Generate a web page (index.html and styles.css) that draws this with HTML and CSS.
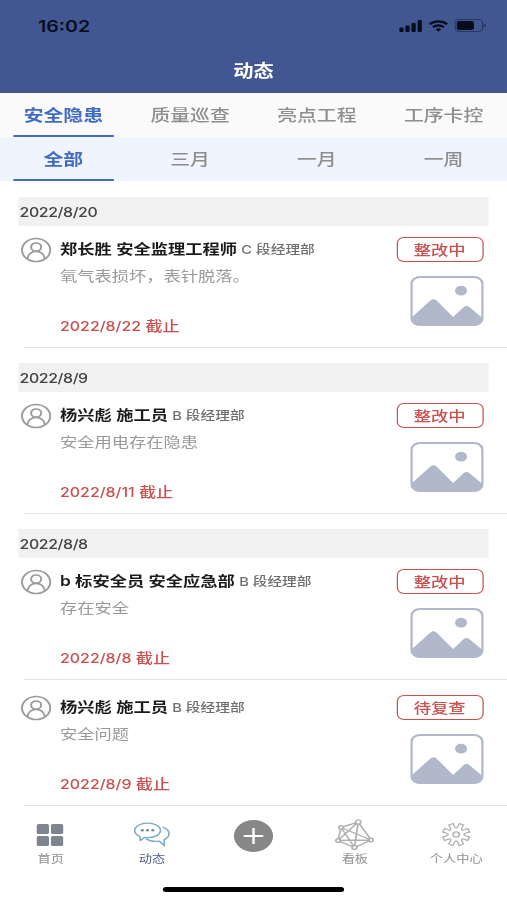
FILE: index.html
```html
<!DOCTYPE html>
<html lang="zh-CN">
<head>
    <meta charset="UTF-8">
    <meta name="viewport" content="width=device-width, initial-scale=1.0">
    <title>动态</title>
    <link rel="stylesheet" href="styles.css">
</head>
<body>
    <!-- Shared icons -->
    <svg class="sprite" aria-hidden="true">
        <symbol id="avatar" viewBox="0 0 26 26">
            <g fill="none" stroke="#9c9c9c" stroke-width="1.7">
                <circle cx="13" cy="13" r="12"/>
                <circle cx="13" cy="10" r="4.300"/>
                <path d="M5.600 22c.6-4.700 3.500-7.600 7.400-7.600s6.800 2.900 7.400 7.600"/>
            </g>
        </symbol>
        <symbol id="picture" viewBox="0 0 60 50">
            <rect x="1" y="1" width="58" height="48" rx="7" fill="#fff" stroke="#b0b8c9" stroke-width="2"/>
            <circle cx="41.500" cy="14.700" r="4.900" fill="#b0b8c9"/>
            <path d="M1 41.500 16.500 24.600q2.500-2.600 5 0L35 41l8.500-9.700q2.500-2.500 5 0L59 42q-.5 7.500-7.500 7.500h-43Q1 49.500 1 41.500z" fill="#b0b8c9"/>
        </symbol>
    </svg>

    <div class="phone">
        <header class="header">
            <div class="status-bar">
                <span class="time">16:02</span>
                <div class="status-icons">
                    <svg width="19" height="12" viewBox="0 0 19 12" fill="#080d1c">
                        <rect x="0" y="7.500" width="3.500" height="4.500" rx="1"/>
                        <rect x="5" y="5.500" width="3.500" height="6.500" rx="1"/>
                        <rect x="10" y="3" width="3.500" height="9" rx="1"/>
                        <rect x="15" y="0" width="3.500" height="12" rx="1"/>
                    </svg>
                    <svg width="16" height="12" viewBox="0 0 16 12" fill="none" stroke="#080d1c" stroke-width="2.100">
                        <path d="M.9 4.300a10.200 10.200 0 0 1 14.200 0"/>
                        <path d="M3.500 7.200a6.500 6.500 0 0 1 9 0"/>
                        <path d="M8 11.700 5.700 9.300a3.300 3.300 0 0 1 4.600 0z" fill="#080d1c" stroke="none"/>
                    </svg>
                    <svg width="26" height="13" viewBox="0 0 26 13">
                        <rect x=".6" y=".6" width="22.500" height="11.800" rx="3.500" fill="none" stroke="#263764" stroke-width="1"/>
                        <rect x="2" y="2" width="14" height="9" rx="1.800" fill="#080d1c"/>
                        <path d="M24 4.500q1.800.6 1.800 2t-1.800 2z" fill="#263764"/>
                    </svg>
                </div>
            </div>
            <h1>动态</h1>
        </header>

        <nav class="tabs">
            <a class="tab active">安全隐患</a>
            <a class="tab">质量巡查</a>
            <a class="tab">亮点工程</a>
            <a class="tab">工序卡控</a>
        </nav>
        <nav class="tabs tabs-period">
            <a class="tab active">全部</a>
            <a class="tab">三月</a>
            <a class="tab">一月</a>
            <a class="tab">一周</a>
        </nav>

        <main class="list">
            <section class="group">
                <h2>2022/8/20</h2>
                <article class="item">
                    <svg class="avatar"><use href="#avatar"/></svg>
                    <div class="info">
                        <p class="name">郑长胜 安全监理工程师 <small>C 段经理部</small></p>
                        <p class="desc">氧气表损坏，表针脱落。</p>
                        <p class="deadline">2022/8/22 <span>截止</span></p>
                    </div>
                    <div class="side">
                        <span class="badge">整改中</span>
                        <svg class="thumb"><use href="#picture"/></svg>
                    </div>
                </article>
            </section>

            <section class="group">
                <h2>2022/8/9</h2>
                <article class="item">
                    <svg class="avatar"><use href="#avatar"/></svg>
                    <div class="info">
                        <p class="name">杨兴彪 施工员 <small>B 段经理部</small></p>
                        <p class="desc">安全用电存在隐患</p>
                        <p class="deadline">2022/8/11 <span>截止</span></p>
                    </div>
                    <div class="side">
                        <span class="badge">整改中</span>
                        <svg class="thumb"><use href="#picture"/></svg>
                    </div>
                </article>
            </section>

            <section class="group">
                <h2>2022/8/8</h2>
                <article class="item">
                    <svg class="avatar"><use href="#avatar"/></svg>
                    <div class="info">
                        <p class="name">b 标安全员 安全应急部 <small>B 段经理部</small></p>
                        <p class="desc">存在安全</p>
                        <p class="deadline">2022/8/8 <span>截止</span></p>
                    </div>
                    <div class="side">
                        <span class="badge">整改中</span>
                        <svg class="thumb"><use href="#picture"/></svg>
                    </div>
                </article>
                <article class="item">
                    <svg class="avatar"><use href="#avatar"/></svg>
                    <div class="info">
                        <p class="name">杨兴彪 施工员 <small>B 段经理部</small></p>
                        <p class="desc">安全问题</p>
                        <p class="deadline">2022/8/9 <span>截止</span></p>
                    </div>
                    <div class="side">
                        <span class="badge">待复查</span>
                        <svg class="thumb"><use href="#picture"/></svg>
                    </div>
                </article>
            </section>
        </main>

        <footer class="tabbar">
            <a class="tabbar-item">
                <svg width="32" height="32" viewBox="0 0 32 32" fill="#7e8490">
                    <rect x="5" y="5" width="10" height="10" rx="1.500"/>
                    <rect x="16.600" y="5" width="10" height="10" rx="1.500"/>
                    <rect x="5" y="17" width="10" height="10" rx="1.500"/>
                    <rect x="16.600" y="17" width="10" height="10" rx="1.500"/>
                </svg>
                <span>首页</span>
            </a>
            <a class="tabbar-item active">
                <svg width="32" height="32" viewBox="0 0 32 32" fill="none" stroke="#79a9c8" stroke-width="1.300" stroke-linejoin="round">
                    <path d="M6.200 17.500C3.500 16 2 13.800 2 11.500 2 7.400 6.800 4.200 12.500 4.200S23 7.400 23 11.500s-4.600 7.200-10.500 7.200c-1 0-1.700 0-2.500-.2L6.700 21.500z"/>
                    <path d="M24.800 8.200c3.200 1.300 5.200 3.700 5.200 6.500 0 2.400-1.500 4.500-4 5.900l.3 6.100-4.200-4.500c-4.200.6-8.500-.3-10.800-2.400"/>
                    <g fill="#6f8dac" stroke="none">
                        <circle cx="8.200" cy="11.300" r="1.300"/>
                        <circle cx="12.500" cy="11.300" r="1.300"/>
                        <circle cx="16.800" cy="11.300" r="1.300"/>
                    </g>
                </svg>
                <span>动态</span>
            </a>
            <a class="tabbar-item">
                <svg width="32" height="32" viewBox="0 0 32 32">
                    <circle cx="16" cy="17" r="16" fill="#878787"/>
                    <path d="M16 9v16M8 17h16" stroke="#fff" stroke-width="2"/>
                </svg>
            </a>
            <a class="tabbar-item">
                <svg width="32" height="32" viewBox="0 0 32 32" fill="none" stroke="#b0b0b0" stroke-width="1.400">
                    <path d="M4.500 8.500 18.500 3 29 21 15.500 28.500 2 21.500zM4.500 8.500 29 21M4.500 8.500l11 20M18.500 3 2 21.500M18.500 3l-3 25.500M2 21.500 29 21"/>
                    <g fill="#fff">
                        <circle cx="4.500" cy="8.500" r="1.800"/>
                        <circle cx="18.500" cy="3" r="2.100"/>
                        <circle cx="29" cy="21" r="1.700"/>
                        <circle cx="15.500" cy="28.500" r="2"/>
                        <circle cx="2" cy="21.500" r="1.800"/>
                    </g>
                </svg>
                <span>看板</span>
            </a>
            <a class="tabbar-item">
                <svg width="32" height="32" viewBox="0 0 32 32" fill="none" stroke="#b0b0b0" stroke-width="1.200" stroke-linejoin="round">
                    <path id="gear"/>
                    <circle cx="15.500" cy="15.500" r="2.600"/>
                </svg>
                <span>个人中心</span>
            </a>
        </footer>
        <div class="home-indicator"></div>
    </div>

    <script>
        // Eight-tooth gear, teeth joined by rounded valleys
        function polar(degrees, r) {
            const angle = degrees * Math.PI / 180;
            return (15.5 + r * Math.cos(angle)).toFixed(2) + " " + (15.5 + r * Math.sin(angle)).toFixed(2);
        }

        let d = "M" + polar(12.5, 11.2);
        for (let i = 0; i < 8; i++) {
            const tooth = i * 45 + 22.5;
            d += "L" + polar(tooth + 10, 11.2);
            d += "C" + polar(tooth + 14, 5) + " " + polar(tooth + 31, 5) + " " + polar(tooth + 35, 11.2);
        }
        document.getElementById("gear").setAttribute("d", d + "Z");
    </script>
</body>
</html>
```
FILE: styles.css
```css
:root {
    --header: #425792;
    --primary: #3f6bc4;
    --grey: #8e8e8e;
    --red: #c9504e;
}

* {
    margin: 0;
    padding: 0;
    box-sizing: border-box;
}

body {
    width: 507px;
    height: 900px;
    overflow: hidden;
    background: #fff;
    font-family: Inter, "Noto Sans CJK SC", sans-serif;
}

.sprite {
    display: none;
}

/* 414pt wide screen stretched to the full window width */
.phone {
    width: 414px;
    height: 900px;
    display: flex;
    flex-direction: column;
    transform: scaleX(1.2246);
    transform-origin: 0 0;
}

.header {
    height: 93px;
    flex: none;
    background: var(--header);
}

.status-bar {
    height: 51px;
    padding: 0 17px 0 31px;
    display: flex;
    align-items: center;
    justify-content: space-between;
}

.time {
    font-size: 16px;
    font-weight: 600;
    color: #080d1c;
}

.status-icons {
    display: flex;
    align-items: center;
    gap: 5px;
}

.header h1 {
    font-size: 16.5px;
    font-weight: 600;
    line-height: 40px;
    text-align: center;
    color: #fff;
}

.tabs {
    display: flex;
    height: 44px;
    flex: none;
    background: #fafafa;
}

.tabs-period {
    background: #f0f4fe;
}

.tab {
    flex: 1;
    margin: 0 10.5px;
    font-size: 16.2px;
    font-weight: 500;
    line-height: 45px;
    text-align: center;
    white-space: nowrap;
    color: var(--grey);
}

.tab.active {
    font-weight: 600;
    color: var(--primary);
    border-bottom: 2px solid var(--primary);
}

.list {
    flex: none;
    height: 625px;
    padding-top: 16px;
}

.group {
    margin-bottom: 15px;
}

.group h2 {
    height: 29px;
    margin: 0 15px;
    padding-left: 1px;
    background: #f1f1f1;
    font-size: 13px;
    font-weight: 500;
    line-height: 30px;
    letter-spacing: -0.35px;
    color: #444;
}

.item {
    position: relative;
    display: flex;
    height: 122px;
    padding: 11px 19.5px 0 17px;
}

.item::after {
    content: '';
    position: absolute;
    left: 20px;
    right: 0;
    bottom: 0;
    height: 1px;
    background: #e2e2e2;
}

.item + .item {
    margin-top: 4px;
}

.avatar {
    width: 25px;
    height: 26px;
    margin-right: 7px;
}

.info {
    flex: 1;
    white-space: nowrap;
}

.name {
    font-size: 14.1px;
    font-weight: 600;
    line-height: 24px;
    color: #1c1c1c;
}

.name small {
    font-size: 12px;
    font-weight: 500;
    color: #6f6f6f;
}

.desc {
    font-size: 14.1px;
    font-weight: 400;
    line-height: 27px;
    color: #999;
}

.deadline {
    margin-top: 25px;
    font-size: 13px;
    font-weight: 500;
    line-height: 24px;
    color: var(--red);
}

.deadline span {
    font-size: 14px;
}

.side {
    display: flex;
    flex-direction: column;
    align-items: flex-end;
}

.badge {
    width: 71px;
    height: 25px;
    border: 1.5px solid var(--red);
    border-radius: 6px;
    font-size: 14.1px;
    font-weight: 500;
    line-height: 23px;
    text-align: center;
    color: var(--red);
}

.thumb {
    width: 60px;
    height: 50px;
    margin-top: 14px;
}

.tabbar {
    display: flex;
    height: 81px;
    flex: none;
    padding-top: 13px;
}

.tabbar-item {
    flex: 1;
    display: flex;
    flex-direction: column;
    align-items: center;
    font-size: 10.8px;
    line-height: 17px;
    color: #8f8f8f;
}

.tabbar-item svg {
    overflow: visible;
}

.tabbar-item.active {
    color: #56618a;
}

.home-indicator {
    width: 148px;
    height: 5px;
    margin: 0 auto;
    border-radius: 3px;
    background: #000;
}
```
